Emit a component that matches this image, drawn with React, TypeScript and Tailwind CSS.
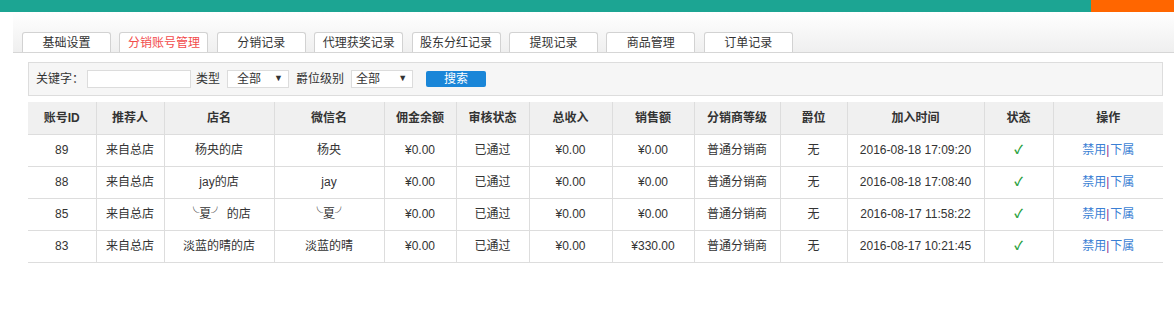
import { Fragment } from 'react'

const tabs = ['基础设置', '分销账号管理', '分销记录', '代理获奖记录', '股东分红记录', '提现记录', '商品管理', '订单记录']

const cols = [
  { title: '账号ID', w: 'w-[68px]' },
  { title: '推荐人', w: 'w-[68px]' },
  { title: '店名', w: 'w-[110px]' },
  { title: '微信名', w: 'w-[110px]' },
  { title: '佣金余额', w: 'w-[72px]' },
  { title: '审核状态', w: 'w-[73px]' },
  { title: '总收入', w: 'w-[83px]' },
  { title: '销售额', w: 'w-[82px]' },
  { title: '分销商等级', w: 'w-[86px]' },
  { title: '爵位', w: 'w-[67px]' },
  { title: '加入时间', w: 'w-[137px]' },
  { title: '状态', w: 'w-[69px]' },
  { title: '操作', w: '' },
]

const rows = [
  { id: '89', shop: '杨央的店', wx: '杨央', sales: '¥0.00', time: '2016-08-18 17:09:20' },
  { id: '88', shop: 'jay的店', wx: 'jay', sales: '¥0.00', time: '2016-08-18 17:08:40' },
  { id: '85', shop: '╰夏╯ 的店', wx: '╰夏╯', sales: '¥0.00', time: '2016-08-17 11:58:22' },
  { id: '83', shop: '淡蓝的晴的店', wx: '淡蓝的晴', sales: '¥330.00', time: '2016-08-17 10:21:45' },
]

const font = { fontFamily: '"Liberation Sans", Arial, "Noto Sans CJK SC", sans-serif' }

export default function App() {
  return (
    <div className="w-[1174px] h-[309px] bg-white text-[12px] text-[#333] overflow-hidden" style={font}>
      {/* top bar */}
      <div className="flex h-[12px]">
        <div className="flex-1 bg-[#1ca593]" />
        <div className="w-[83px] bg-[#ff6600]" />
      </div>

      {/* tabs */}
      <div className="ml-[13px] h-[41px] flex items-end gap-[8.4px] pl-[9px] border-b border-[#d6d6d6] bg-gradient-to-b from-white to-[#efefef]">
        {tabs.map((t, i) => (
          <div
            key={t}
            className={`w-[89px] h-[20px] flex items-center justify-center bg-white border border-b-0 border-[#d2d2d2] rounded-t-[3px] text-[12px] leading-none ${
              i === 1 ? 'text-[#f24b4b]' : 'text-[#333]'
            }`}
          >
            {t}
          </div>
        ))}
      </div>

      <div className="pl-[28px] pr-[11px] pt-[9px]">
        {/* filter */}
        <div className="h-[34px] flex items-center bg-[#f6f6f6] border border-[#dddddd] pl-[7px] text-[12px]">
          <span className="mr-[3px]">关键字：</span>
          <div className="w-[104px] h-[18px] bg-white border border-[#dcdcdc]" />
          <span className="ml-[5px] mr-[7px]">类型</span>
          <div className="w-[62px] h-[18px] bg-white border border-[#dcdcdc] flex items-center justify-between pl-[9px] pr-[5px]">
            <span>全部</span>
            <span className="text-[9px]">▼</span>
          </div>
          <span className="ml-[7px] mr-[7px]">爵位级别</span>
          <div className="w-[62px] h-[18px] bg-white border border-[#dcdcdc] flex items-center justify-between pl-[4px] pr-[5px]">
            <span>全部</span>
            <span className="text-[9px]">▼</span>
          </div>
          <div className="ml-[13px] w-[60px] h-[16px] rounded-[2px] bg-[#1a86d8] text-white flex items-center justify-center">
            搜索
          </div>
        </div>

        {/* table */}
        <table className="mt-[6px] w-full table-fixed border-collapse">
          <thead>
            <tr className="h-[32px] bg-[#f0f0f0] border-b border-[#dddddd]">
              {cols.map((c, i) => (
                <th
                  key={c.title}
                  className={`${c.w} font-bold text-[12px] text-[#333] ${i > 0 ? 'border-l border-[#dddddd]' : ''}`}
                >
                  {c.title}
                </th>
              ))}
            </tr>
          </thead>
          <tbody>
            {rows.map((r) => {
              const cells = [
                r.id,
                '来自总店',
                r.shop,
                r.wx,
                '¥0.00',
                '已通过',
                '¥0.00',
                r.sales,
                '普通分销商',
                '无',
                r.time,
              ]
              return (
                <tr key={r.id} className="h-[32px] border-b border-[#dddddd]">
                  {cells.map((v, i) => (
                    <td key={i} className={`text-center ${i > 0 ? 'border-l border-[#dddddd]' : ''}`}>
                      {v}
                    </td>
                  ))}
                  <td className="text-center border-l border-[#dddddd] text-[#1f9e3a] text-[12px] font-bold">✓</td>
                  <td className="text-center border-l border-[#dddddd]">
                    <span className="text-[#3b7fd4]">禁用</span>
                    <span className="text-[#8a2f8f]">|</span>
                    <span className="text-[#3b7fd4] ml-[1px]">下属</span>
                  </td>
                </tr>
              )
            })}
          </tbody>
        </table>
      </div>
    </div>
  )
}
